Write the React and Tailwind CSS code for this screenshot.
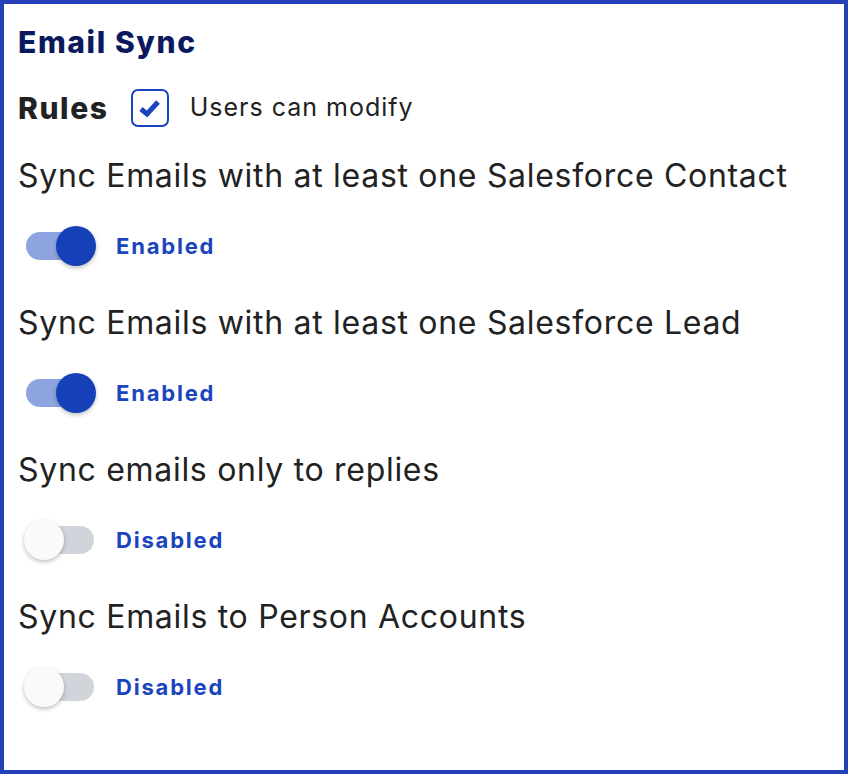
import { useState } from "react";

const rulesList = [
    { id: 1, label: "Sync Emails with at least one Salesforce Contact", on: true },
    { id: 2, label: "Sync Emails with at least one Salesforce Lead", on: true },
    { id: 3, label: "Sync emails only to replies", on: false },
    { id: 4, label: "Sync Emails to Person Accounts", on: false },
];

function Toggle({ on, onClick }) {
    return (
        <button onClick={onClick} className="relative w-[72px] h-[40px] flex items-center">
            <span className={`absolute left-[2px] w-[68px] h-[28px] rounded-full ${on ? "bg-[#8ea4e0]" : "bg-[#d1d5db]"}`}></span>
            <span
                className={`absolute top-0 w-[40px] h-[40px] rounded-full shadow-[0_2px_4px_rgba(0,0,0,0.25)] transition-all ${on ? "left-[32px] bg-[#1540b8]" : "left-0 bg-[#fafafa]"}`}
            ></span>
        </button>
    );
}

function App() {
    const [rules, setRules] = useState(rulesList);
    const [canModify, setCanModify] = useState(true);

    const flip = (id) => {
        setRules(rules.map((r) => (r.id === id ? { ...r, on: !r.on } : r)));
    };

    return (
        <div className="w-[848px] h-[774px] bg-white border-4 border-[#2441ba] font-['Inter',sans-serif] text-[#222222] px-[14px]">
            <h1 className="mt-[20px] h-[36px] leading-[36px] text-[30px] font-extrabold text-[#0b1a5e] tracking-[1.6px]">Email Sync</h1>

            <div className="mt-[18px] h-[60px] flex items-center">
                <h2 className="text-[30px] font-extrabold tracking-[1.6px]">Rules</h2>
                <button
                    onClick={() => setCanModify(!canModify)}
                    className="ml-[22px] w-[38px] h-[38px] rounded-[7px] border-2 border-[#1a45bd] flex items-center justify-center"
                >
                    {canModify && (
                        <svg width="22" height="18" viewBox="0 0 22 18">
                            <path d="M2 10 L8 15 L19 3" fill="none" stroke="#1a45bd" strokeWidth="5" strokeLinejoin="miter" />
                        </svg>
                    )}
                </button>
                <span className="ml-[21px] text-[25px] tracking-[1px]">Users can modify</span>
            </div>

            <div className="mt-[18px] flex flex-col">
                {rules.map((rule) => (
                    <div key={rule.id} className="h-[147px] flex flex-col">
                        <p className="h-[40px] leading-[40px] text-[32px] tracking-[0.7px] whitespace-nowrap">{rule.label}</p>
                        <div className="mt-[30px] flex items-center ml-[6px]">
                            <Toggle on={rule.on} onClick={() => flip(rule.id)} />
                            <span className="ml-[20px] text-[22px] font-bold text-[#1a45bd] tracking-[1.8px]">
                                {rule.on ? "Enabled" : "Disabled"}
                            </span>
                        </div>
                    </div>
                ))}
            </div>
        </div>
    );
}

export default App;
